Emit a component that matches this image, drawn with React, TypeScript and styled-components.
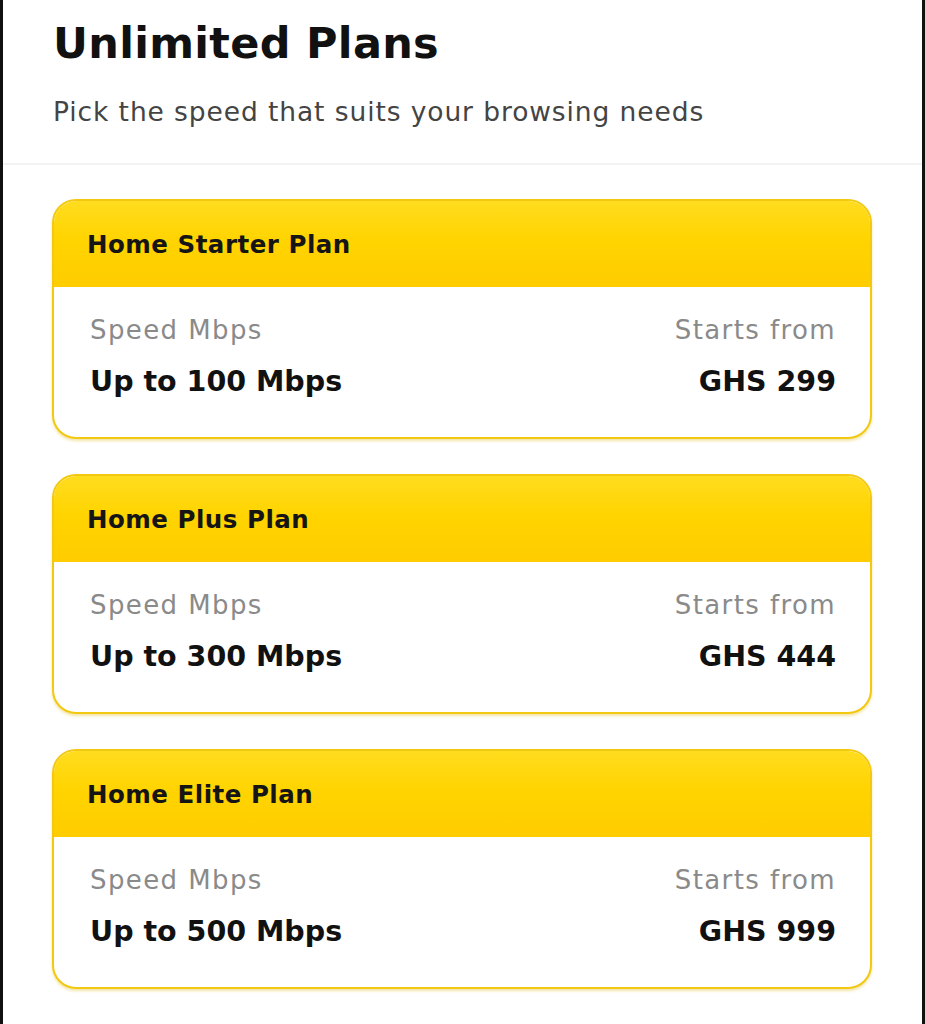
import React from "react";
import styled, { createGlobalStyle } from "styled-components";

const GlobalStyle = createGlobalStyle`
  html, body {
    margin: 0;
    padding: 0;
    background: #ffffff;
  }
  body {
    font-family: "DejaVu Sans", "Noto Sans", "Liberation Sans", sans-serif;
    color: #111111;
  }
`;

const Frame = styled.div`
  box-sizing: border-box;
  width: 925px;
  min-height: 1024px;
  border-left: 3px solid #111111;
  border-right: 3px solid #111111;
  background: #ffffff;
  display: flex;
  flex-direction: column;
`;

const Header = styled.header`
  padding: 17px 0 0 50px;
  height: 165px;
  box-sizing: border-box;
  border-bottom: 2px solid #f3f3f3;
  display: flex;
  flex-direction: column;
  gap: 27px;
`;

const Title = styled.h1`
  margin: 0;
  font-size: 43px;
  line-height: 52px;
  font-weight: 700;
  color: #111111;
  letter-spacing: 0.3px;
`;

const Subtitle = styled.p`
  margin: 0;
  font-size: 26.5px;
  line-height: 32px;
  font-weight: 400;
  color: #444444;
  letter-spacing: 0.9px;
`;

const PlanList = styled.main`
  display: flex;
  flex-direction: column;
  gap: 35px;
  padding: 34px 50px 0 49px;
`;

const Card = styled.section`
  box-sizing: border-box;
  height: 240px;
  border: 2px solid #f2c811;
  border-radius: 24px;
  overflow: hidden;
  display: flex;
  flex-direction: column;
  background: #ffffff;
  box-shadow: 0 2px 3px rgba(220, 180, 0, 0.35);
`;

const CardHead = styled.div`
  height: 86px;
  flex: none;
  background: linear-gradient(180deg, #ffdc1f 0%, #ffd400 45%, #ffcc00 100%);
  display: flex;
  align-items: center;
  padding-left: 33px;
  font-size: 24.5px;
  font-weight: 700;
  color: #151515;
  letter-spacing: 0.5px;
`;

const CardBody = styled.div`
  flex: 1;
  display: flex;
  justify-content: space-between;
  padding: 26px 34px 0 36px;
`;

const Column = styled.div<{ $align: "left" | "right" }>`
  display: flex;
  flex-direction: column;
  align-items: ${(p) => (p.$align === "right" ? "flex-end" : "flex-start")};
  gap: 17px;
`;

const Label = styled.span`
  font-size: 26px;
  line-height: 34px;
  font-weight: 400;
  color: #8a8a8a;
  letter-spacing: 1.4px;
`;

const Value = styled.span`
  font-size: 28.5px;
  line-height: 36px;
  font-weight: 700;
  color: #111111;
  letter-spacing: 0px;
`;

const plans = [
  { name: "Home Starter Plan", speed: "Up to 100 Mbps", price: "GHS 299" },
  { name: "Home Plus Plan", speed: "Up to 300 Mbps", price: "GHS 444" },
  { name: "Home Elite Plan", speed: "Up to 500 Mbps", price: "GHS 999" },
];

export default function App() {
  return (
    <>
      <GlobalStyle />
      <Frame>
        <Header>
          <Title>Unlimited Plans</Title>
          <Subtitle>Pick the speed that suits your browsing needs</Subtitle>
        </Header>
        <PlanList>
          {plans.map((p) => (
            <Card key={p.name}>
              <CardHead>{p.name}</CardHead>
              <CardBody>
                <Column $align="left">
                  <Label>Speed Mbps</Label>
                  <Value>{p.speed}</Value>
                </Column>
                <Column $align="right">
                  <Label>Starts from</Label>
                  <Value>{p.price}</Value>
                </Column>
              </CardBody>
            </Card>
          ))}
        </PlanList>
      </Frame>
    </>
  );
}
